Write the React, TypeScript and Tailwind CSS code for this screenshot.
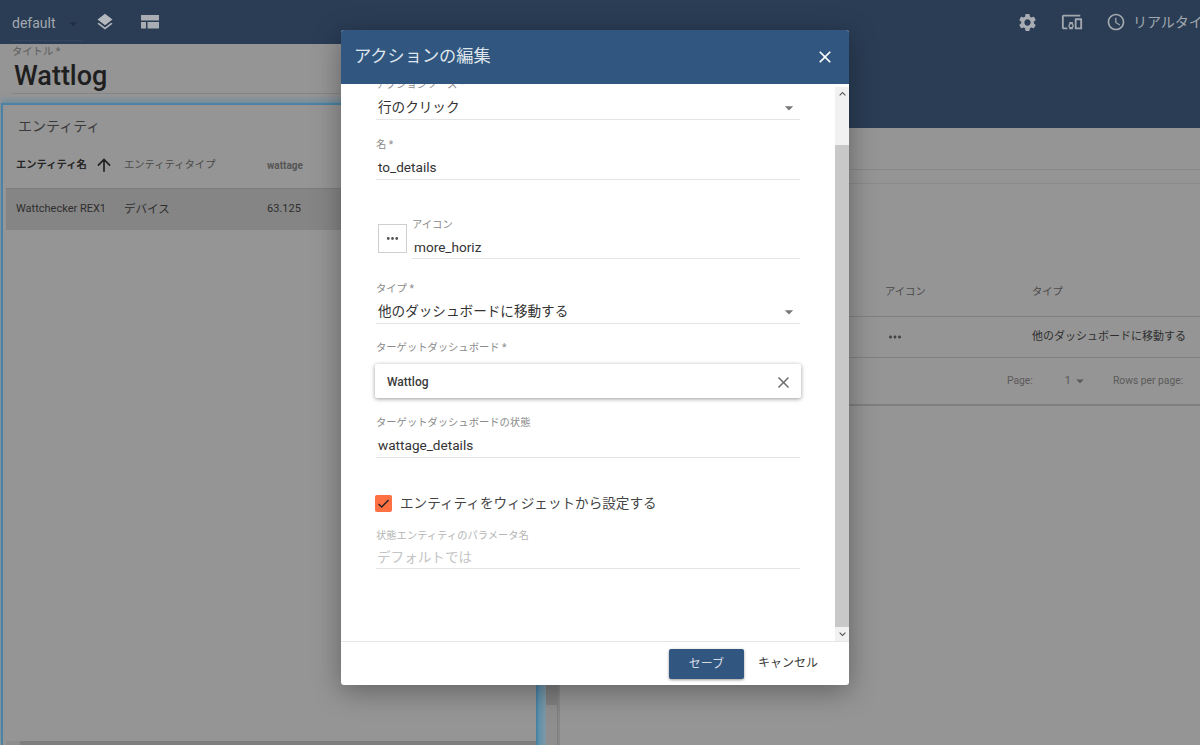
import type { ReactNode } from 'react';
import { MdSettings, MdLayers, MdDevicesOther, MdAccessTime, MdClose, MdMoreHoriz, MdArrowDropDown, MdArrowUpward, MdCheck, MdKeyboardArrowUp, MdKeyboardArrowDown } from 'react-icons/md';

function LayoutIcon() {
  return (
    <svg width="18" height="14" viewBox="0 0 18 14" className="text-[#a9adb3]" fill="currentColor">
      <rect x="0" y="0" width="18" height="5.5" />
      <rect x="0" y="7" width="5" height="6.5" />
      <rect x="6.5" y="7" width="11.5" height="6.5" />
    </svg>
  );
}

function TopBar() {
  return (
    <div className="h-[44px] shrink-0 bg-[#2a3d55] flex items-center pl-3 text-[#a3a8ae]">
      <div className="w-[70px] h-[36px] flex items-center gap-[14px] pt-[2px] border-b border-[#32465e] mt-[2px]">
        <span className="text-[14px]">default</span>
        <MdArrowDropDown className="text-[20px] text-[#1f2e40] -ml-[6px]" />
      </div>
      <MdLayers className="text-[20px] ml-[13px] text-[#b4b8bd]" />
      <div className="ml-[26px]"><LayoutIcon /></div>
      <div className="ml-auto flex items-center">
        <MdSettings className="text-[21px] text-[#a9adb3]" />
        <MdDevicesOther className="text-[22px] ml-[23px]" />
        <MdAccessTime className="text-[20px] ml-[23px]" />
        <span className="text-[14px] ml-[7px] whitespace-nowrap w-[67px] overflow-hidden">リアルタイム</span>
      </div>
    </div>
  );
}

function LeftColumn() {
  return (
    <div className="w-[558px] shrink-0 flex flex-col">
      <div className="h-[59px] shrink-0 pl-3 pr-4 pt-[1px]">
        <div className="text-[10.3px] leading-[14px] text-[#5c5c5c]">タイトル *</div>
        <div className="pt-[1px] text-[27px] leading-[33px] font-medium text-[#1f1f1f] border-b border-[#868686] w-[328px] pl-[2px]">Wattlog</div>
      </div>
      <div className="flex-1 flex min-h-0">
        <div className="flex-1 ml-[1px] border-l-[2px] border-t-[2px] border-r-[2px] border-[#4a83a5] flex flex-col shadow-[0_-3px_6px_rgba(74,135,168,0.55)]">
          <div className="flex-1 pl-[3px] pt-[9px]">
            <div className="pl-[12px] text-[14px] leading-[24px] text-[#3a3a3a]">エンティティ</div>
            <div className="flex items-center h-[46px] mt-[4px] text-[10.3px] text-[#4a4a4a] font-medium">
              <span className="w-[74px] pl-[10px] box-content font-bold text-[#262626] whitespace-nowrap">エンティティ名</span>
              <MdArrowUpward className="text-[20px] text-[#1f1f1f] ml-[4px]" />
              <span className="ml-[10px] w-[143px] whitespace-nowrap font-normal">エンティティタイプ</span>
              <span className="text-[#565656] text-[10px] font-bold">wattage</span>
            </div>
            <div className="flex items-center h-[42px] bg-[#858585] border-t border-[#7c7c7c] text-[#2e2e2e]">
              <span className="w-[118px] pl-[10px] text-[11px] whitespace-nowrap">Wattchecker REX1</span>
              <span className="w-[143px] text-[11.5px]">デバイス</span>
              <span className="text-[11px]">63.125</span>
            </div>
          </div>
          <div className="h-[4px] ml-[3px] bg-[#7e7e7e] flex">
            <div className="w-[14px] bg-[#8d8d8d]" />
          </div>
        </div>
        <div className="w-[8px] bg-linear-to-r from-[#5a8fab] to-[#7f98a5]" />
        <div className="w-[12px] bg-[#8e8e8e] flex flex-col border-r border-[#7f7f7f]">
          <div className="h-[602px] bg-[#7f7f7f]" />
        </div>
      </div>
    </div>
  );
}

function RightColumn() {
  return (
    <div className="flex-1 flex flex-col border-l-[2px] border-[#878787]">
      <div className="h-[84px] shrink-0 bg-[#2a3d55]" />
      <div className="h-[42px] shrink-0 border-b border-[#878787]" />
      <div className="h-[14px] shrink-0 border-b border-[#8a8a8a]" />
      <div className="border-b-2 border-[#7f7f7f] text-[#3e3e3e]">
        <div className="h-[133px] border-b border-[#808080] flex items-end pb-[17px] text-[10.3px] text-[#4a4a4a]">
          <span className="ml-[325px] w-[147px]">アイコン</span>
          <span>タイプ</span>
        </div>
        <div className="h-[41px] border-b border-[#808080] flex items-center">
          <MdMoreHoriz className="text-[18px] ml-[326px] mr-[128px] text-[#444444]" />
          <span className="text-[11px] whitespace-nowrap text-[#2e2e2e]">他のダッシュボードに移動する</span>
        </div>
        <div className="h-[46px] flex items-center text-[10.3px] text-[#5a5a5a]">
          <span className="ml-[447px]">Page:</span>
          <span className="ml-[32px] text-[11px]">1</span>
          <MdArrowDropDown className="text-[18px]" />
          <span className="ml-[24px] whitespace-nowrap">Rows per page:</span>
        </div>
      </div>
    </div>
  );
}

function Label({ children, light }: { children: ReactNode; light?: boolean }) {
  return <div className={light ? 'text-[10.3px] leading-[16px] -mb-[2px] text-[#b5b5b5]' : 'text-[10.3px] leading-[16px] -mb-[2px] text-[#8a8a8a]'}>{children}</div>;
}

function Field({ label, value, select }: { label: string; value: string; select?: boolean }) {
  return (
    <div>
      <Label>{label}</Label>
      <div className="flex items-center h-[29px] pt-[5px] pl-[2px] text-[13.6px] text-[#333333] border-b border-[#e4e4e4]">
        <span className="flex-1">{value}</span>
        {select && <MdArrowDropDown className="text-[20px] text-[#777777] mr-[1px]" />}
      </div>
    </div>
  );
}

function Dialog() {
  return (
    <div className="absolute left-[341px] top-[30px] w-[508px] h-[655px] bg-white rounded-[3px] overflow-hidden flex flex-col shadow-[0_6px_28px_rgba(0,0,0,0.35)]">
      <div className="h-[54px] shrink-0 bg-[#31567f] flex items-center pl-[13px] pr-[14px] text-[#dfe5ec]">
        <span className="text-[17.2px] flex-1 -mt-[1px]">アクションの編集</span>
        <MdClose className="text-[20px] text-white" />
      </div>
      <div className="flex-1 flex min-h-0">
        <div className="flex-1 overflow-hidden pl-[35px] pr-[35px]">
          <div className="-mt-[7px] flex flex-col">
            <Field label="アクションソース *" value="行のクリック" select />
            <div className="mt-[17px]"><Field label="名 *" value="to_details" /></div>
            <div className="mt-[37px] flex items-start">
              <div className="ml-[2px] mt-[7px] w-[29px] h-[29px] border border-[#cfcfcf] flex items-center justify-center text-[#555555]">
                <MdMoreHoriz className="text-[17px]" />
              </div>
              <div className="flex-1 ml-[5px]">
                <Label>アイコン</Label>
                <div className="h-[28px] pt-[6px] flex items-center pl-[2px] text-[13.6px] text-[#333333] border-b border-[#e4e4e4]">more_horiz</div>
              </div>
            </div>
            <div className="mt-[22px]"><Field label="タイプ *" value="他のダッシュボードに移動する" select /></div>
            <div className="mt-[16px]"><Label>ターゲットダッシュボード *</Label></div>
            <div className="mt-[10px] -mx-[1px] h-[34px] flex items-center pl-[12px] pr-[8px] pt-[2px] text-[12px] font-medium text-[#3a3a3a] rounded-[2px] shadow-[0_1px_4px_rgba(0,0,0,0.4)]">
              <span className="flex-1">Wattlog</span>
              <MdClose className="text-[19px] text-[#707070]" />
            </div>
            <div className="mt-[17px]"><Field label="ターゲットダッシュボードの状態" value="wattage_details" /></div>
            <div className="mt-[36px] flex items-center h-[18px] -ml-[1px]">
              <div className="w-[17px] h-[17px] rounded-[2px] bg-[#ff7043] flex items-center justify-center">
                <MdCheck className="text-[15px] text-[#222222]" />
              </div>
              <span className="ml-[8px] text-[13.6px] text-[#444444]">エンティティをウィジェットから設定する</span>
            </div>
            <div className="mt-[16px]"><Label light>状態エンティティのパラメータ名</Label></div>
            <div className="h-[27px] pt-[5px] flex items-center pl-[1px] text-[13.6px] text-[#c4c4c4] border-b border-[#e4e4e4]">デフォルトでは</div>
          </div>
        </div>
        <div className="w-[14px] shrink-0 bg-[#f1f1f1] flex flex-col mt-[3px] items-center">
          <MdKeyboardArrowUp className="text-[13px] text-[#505050] h-[14px] shrink-0" />
          <div className="w-full h-[44px] shrink-0" />
          <div className="w-full flex-1 bg-[#c8c8c8]" />
          <MdKeyboardArrowDown className="text-[13px] text-[#505050] h-[14px] shrink-0" />
        </div>
      </div>
      <div className="h-[44px] shrink-0 border-t border-[#e6e6e6] flex items-center pr-[31px] justify-end">
        <div className="w-[75px] h-[30px] rounded-[2px] bg-[#31567f] text-[#d5dce4] text-[12px] flex items-center justify-center shadow-[0_1px_3px_rgba(0,0,0,0.4)]">セーブ</div>
        <span className="ml-[14px] text-[12px] text-[#3a3a3a] -mt-[2px]">キャンセル</span>
      </div>
    </div>
  );
}

export default function App() {
  return (
    <div className="relative w-[1200px] h-[745px] overflow-hidden bg-[#959595] flex flex-col font-['Roboto','Noto_Sans_CJK_JP',sans-serif]">
      <TopBar />
      <div className="flex-1 flex min-h-0">
        <LeftColumn />
        <RightColumn />
      </div>
      <Dialog />
    </div>
  );
}
